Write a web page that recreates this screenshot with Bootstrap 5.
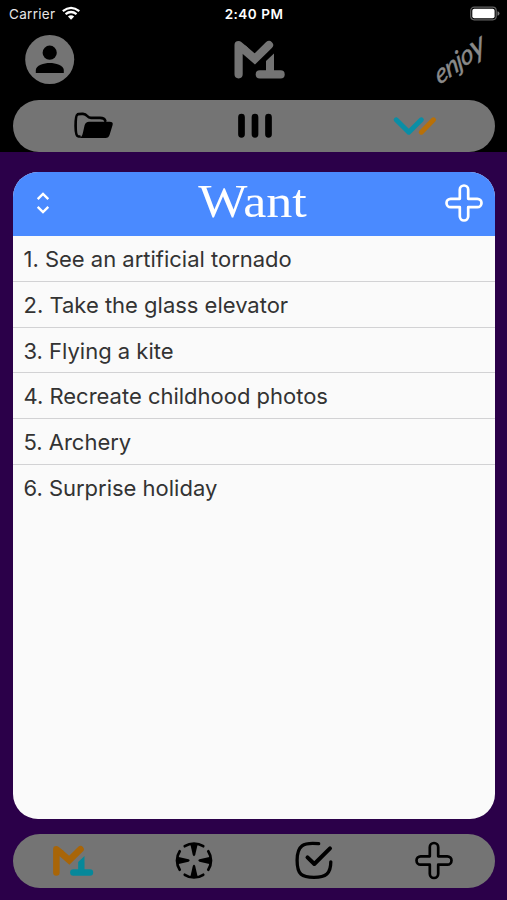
<!DOCTYPE html>
<html lang="en">
<head>
<meta charset="utf-8">
<meta name="viewport" content="width=device-width, initial-scale=1">
<title>Want</title>
<link href="https://cdn.jsdelivr.net/npm/bootstrap@5.3.0/dist/css/bootstrap.min.css" rel="stylesheet">
<style>
body{font-family:Inter,"Liberation Sans",sans-serif;background:#2b0049;height:900px;overflow:hidden}
.top-area{height:152px;background:#000}
.status-line{height:28px;color:#fff;font-size:13.5px;line-height:28px;padding:0 7px 0 9px}
.status-line .carrier{color:#e6e6e6;letter-spacing:.3px}
.status-line .clock{font-weight:600;font-size:13.5px;letter-spacing:.5px;margin-right:1px}
.brand-line{height:72px;padding:0 20px 0 25px}
.brand-mark{margin-left:7px}
.pill{margin:0 12.5px 0 13px;background:#747474;border-radius:27px}
.pill-top{height:52px}
.pill-bottom{height:54px;margin-top:15px}
.want-card{margin:19.5px 12.5px 0 13px;height:647.5px;border-radius:25px;background:#fafafa}
.want-head{height:64.5px;background:#4a8aff}
.want-title{font-family:"Liberation Serif",serif;font-size:46.5px;line-height:59px;color:#fff;font-weight:400;transform:translateX(-7px) scaleX(1.12)}
.want-row{height:45.8px;line-height:46px;padding:0 10.5px;border:0;border-bottom:1.5px solid #d2d2d4;background:#fafafa;color:#333;font-size:22px;letter-spacing:-.01px}
.want-row:last-child{border-bottom:0}
.enjoy{font-family:Lato,"Liberation Sans",sans-serif;font-style:italic;font-size:26px;line-height:30px;width:50px;color:#8a8a8a;letter-spacing:-.8px;-webkit-text-stroke:.4px #8a8a8a;transform:translate(-6px,-4px) rotate(-22deg) skewY(-14deg)}
.enjoy .tall{font-size:31px}
svg{display:block;overflow:visible}
</style>
<script src="https://cdn.jsdelivr.net/npm/bootstrap@5.3.0/dist/js/bootstrap.bundle.min.js"></script>
</head>
<body class="d-flex flex-column">
<header class="top-area flex-shrink-0">
  <div class="status-line row g-0">
    <div class="col d-flex align-items-center"><span class="carrier">Carrier</span>
      <svg class="ms-1 ps-1" width="22" height="14" viewBox="1 .5 19 14" fill="none" stroke="#fff" stroke-width="2.4"><path d="M.8 4.5Q9.5-2.4 18.2 4.5M3.7 7.6Q9.5 3.1 15.3 7.6"/><path d="M6.2 10.2Q9.5 7.5 12.8 10.2L9.5 13.6Z" fill="#fff" stroke="none"/></svg>
    </div>
    <div class="col-auto clock">2:40 PM</div>
    <div class="col d-flex align-items-center justify-content-end">
      <svg width="30" height="14" viewBox="0 0 30 14"><rect x=".7" y=".2" width="25.5" height="12.6" rx="3.5" fill="none" stroke="#626262" stroke-width="1.2"/><rect x="2.3" y="1.8" width="22.3" height="9.4" rx="2" fill="#fff"/><path d="M27.5 4.2Q29.5 4.7 29.5 6.5T27.5 8.8Z" fill="#777"/></svg>
    </div>
  </div>
  <div class="brand-line row g-0">
    <div class="col pt-2"><svg width="49" height="49" viewBox="0 0 49 49"><circle cx="24.7" cy="23.5" r="24.5" fill="#747474"/><circle cx="24.7" cy="16.7" r="7.1"/><path d="M10.8 37V34C10.8 29.5 19 27 24.8 27S38.8 29.5 38.8 34V37Z"/></svg></div>
    <div class="col-auto pt-2 mt-1 brand-mark"><svg width="51" height="39" viewBox="0 0 51 39" fill="none" stroke="#747474" stroke-width="8.2" stroke-linecap="round" stroke-linejoin="round"><path d="M4.6 34.3V5L10 9.6"/><path d="M10 9.6 20.8 18.9 35 5" stroke-linejoin="miter"/><path d="M25.8 34.4H46.6"/><path d="M32 34V21L40 13.5V34Z" fill="#747474" stroke="none"/></svg></div>
    <div class="col d-flex justify-content-end align-items-center"><div class="enjoy text-center text-nowrap">enjo<span class="tall">y</span></div></div>
  </div>
  <div class="pill pill-top row g-0 align-items-center">
    <div class="col d-flex justify-content-center">
      <svg width="40" height="28" viewBox="-1 0 40 28"><path d="M5.5 24.5H4.5Q1.6 24.5 1.6 14T3.4 2.6Q4.2 1.8 9 1.9Q11.5 2 13.2 4Q14.7 5.8 17 5.8H26Q30.5 5.8 31.3 8.8" fill="none" stroke="#000" stroke-width="2.7" stroke-linecap="round"/><path d="M15 9.8H35.5Q39.5 9.8 38.6 13L35.7 22.5Q34.7 26 31.5 26H5.5Q8 25 9 20.5L10.6 13.3Q11.6 9.8 15 9.8Z"/></svg>
    </div>
    <div class="col d-flex justify-content-center"><svg width="36" height="26" viewBox="0 0 36 26" stroke="#000" stroke-width="6.7" stroke-linecap="round"><path d="M5.5 4.2V21.3M19 4.2V21.3M32.5 4.2V21.3"/></svg></div>
    <div class="col d-flex justify-content-center"><svg width="42" height="20" viewBox="-1 0 42 20" fill="none" stroke-width="5" stroke-linecap="round" stroke-linejoin="round"><path d="M27.3 16.2 39.5 3.8" stroke="#b87008"/><path d="M2.2 3.8 14.8 16.2 27.3 3.8" stroke="#0a8ea6"/></svg></div>
  </div>
</header>
<main class="want-card overflow-hidden flex-shrink-0">
  <div class="want-head row g-0">
    <div class="col d-flex align-items-center ps-4"><svg width="12" height="24" viewBox="0 0 12 24" fill="none" stroke="#fff" stroke-width="2.4"><path d="M.7 7.1 6 2 11.3 7.1M.7 14.9 6 20 11.3 14.9"/></svg></div>
    <h1 class="col-auto want-title m-0">Want</h1>
    <div class="col d-flex align-items-center justify-content-end pe-2 me-1"><svg width="38" height="38" viewBox="0 1 38 38" fill="none" stroke="#fff" stroke-width="2.7" stroke-linejoin="round"><path id="plus" d="M14.8 5.7a4.2 4.2 0 0 1 8.4 0V14.8H32.3a4.2 4.2 0 0 1 0 8.4H23.2V32.3a4.2 4.2 0 0 1-8.4 0V23.2H5.7a4.2 4.2 0 0 1 0-8.4H14.8Z"/></svg></div>
  </div>
  <div class="list-group list-group-flush">
    <div class="list-group-item want-row">1. See an artificial tornado</div>
    <div class="list-group-item want-row">2. Take the glass elevator</div>
    <div class="list-group-item want-row">3. Flying a kite</div>
    <div class="list-group-item want-row">4. Recreate childhood photos</div>
    <div class="list-group-item want-row">5. Archery</div>
    <div class="list-group-item want-row">6. Surprise holiday</div>
  </div>
</main>
<nav class="pill pill-bottom row g-0 align-items-center flex-shrink-0">
  <div class="col d-flex justify-content-center"><svg width="42" height="31" viewBox="0 1 51 39" fill="none" stroke-width="8.2" stroke-linecap="round" stroke-linejoin="round"><path d="M26 34.4H46.8" stroke="#06889a"/><path d="M32 34V21L40 13.5V34Z" fill="#06889a"/><path d="M4.6 34.3V5L10 9.6" stroke="#a86508"/><path d="M10 9.6 20.8 18.9 35 5" stroke="#a86508" stroke-linejoin="miter"/></svg></div>
  <div class="col d-flex justify-content-center"><svg width="38" height="38" viewBox="0 .5 38 38"><circle cx="19" cy="19" r="17" fill="none" stroke="#000" stroke-width="2.7" stroke-linecap="round" pathLength="360" stroke-dasharray="66 24" stroke-dashoffset="33"/><path id="ray" d="M15.3 2.5H22.7L20.2 13.5Q19 15.8 17.8 13.5Z"/><use href="#ray" transform="rotate(90 19 19)"/><use href="#ray" transform="rotate(180 19 19)"/><use href="#ray" transform="rotate(270 19 19)"/></svg></div>
  <div class="col d-flex justify-content-center"><svg width="38" height="38" viewBox="0 .5 38 38" fill="none" stroke="#000" stroke-width="3.3" stroke-linecap="round" stroke-linejoin="round"><path d="M23.7 2.2C8 .5 2.1 4 2.1 18.8S7 35.8 19 35.8 35.8 32 35.8 20.3"/><path d="M12.5 15.8 19.3 22.5 35 6.8" stroke-width="4"/></svg></div>
  <div class="col d-flex justify-content-center"><svg width="38" height="38" viewBox="0 .5 38 38" fill="none" stroke="#000" stroke-width="2.7" stroke-linejoin="round"><use href="#plus"/></svg></div>
</nav>
</body>
</html>
